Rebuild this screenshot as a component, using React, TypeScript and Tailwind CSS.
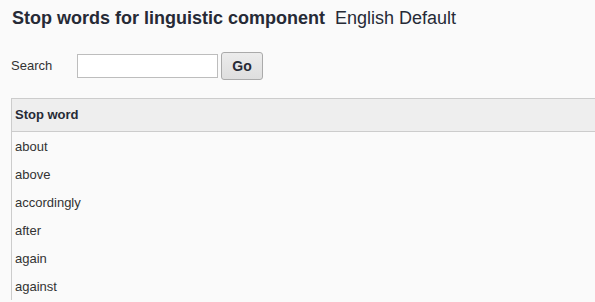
import React from 'react';

const stopWords = ['about', 'above', 'accordingly', 'after', 'again', 'against'];

const App = () => {
    return (
        <div className="min-h-screen bg-[#fafafa] overflow-hidden pl-[11px] pt-[7px] font-['Liberation_Sans',Arial,sans-serif] text-[#333]">
            {/* Heading */}
            <h1 className="text-[18px] leading-[22px] text-[#262a36] pl-[1px]">
                <span className="font-bold">Stop words for linguistic component</span>
                <span className="ml-[10px]">English Default</span>
            </h1>

            {/* Search */}
            <div className="flex items-center mt-[23px] h-[28px]">
                <label className="w-[66px] text-[13px]">Search</label>
                <input
                    type="text"
                    className="w-[141px] h-[24px] bg-white border border-[#bdbdbd] px-1 text-[13px] outline-none"
                />
                <button className="ml-[3px] w-[42px] h-[28px] rounded-[3px] border border-[#aaa] bg-gradient-to-b from-[#ececec] to-[#dedede] text-[14px] font-bold text-[#262a36]">
                    Go
                </button>
            </div>

            {/* Table */}
            <table className="mt-[18px] w-[640px] border-collapse text-[13px]">
                <thead>
                    <tr className="bg-[#eeeeee] border-y border-l border-[#cccccc]">
                        <th className="h-[33px] pl-[3px] text-left font-bold text-[#262a36]">Stop word</th>
                    </tr>
                </thead>
                <tbody>
                    {stopWords.map((w) => (
                        <tr key={w} className="border-l border-[#cccccc]">
                            <td className="h-[28px] pl-[3px] pt-[1px] leading-[27px]">{w}</td>
                        </tr>
                    ))}
                </tbody>
            </table>
        </div>
    );
};

export default App;
